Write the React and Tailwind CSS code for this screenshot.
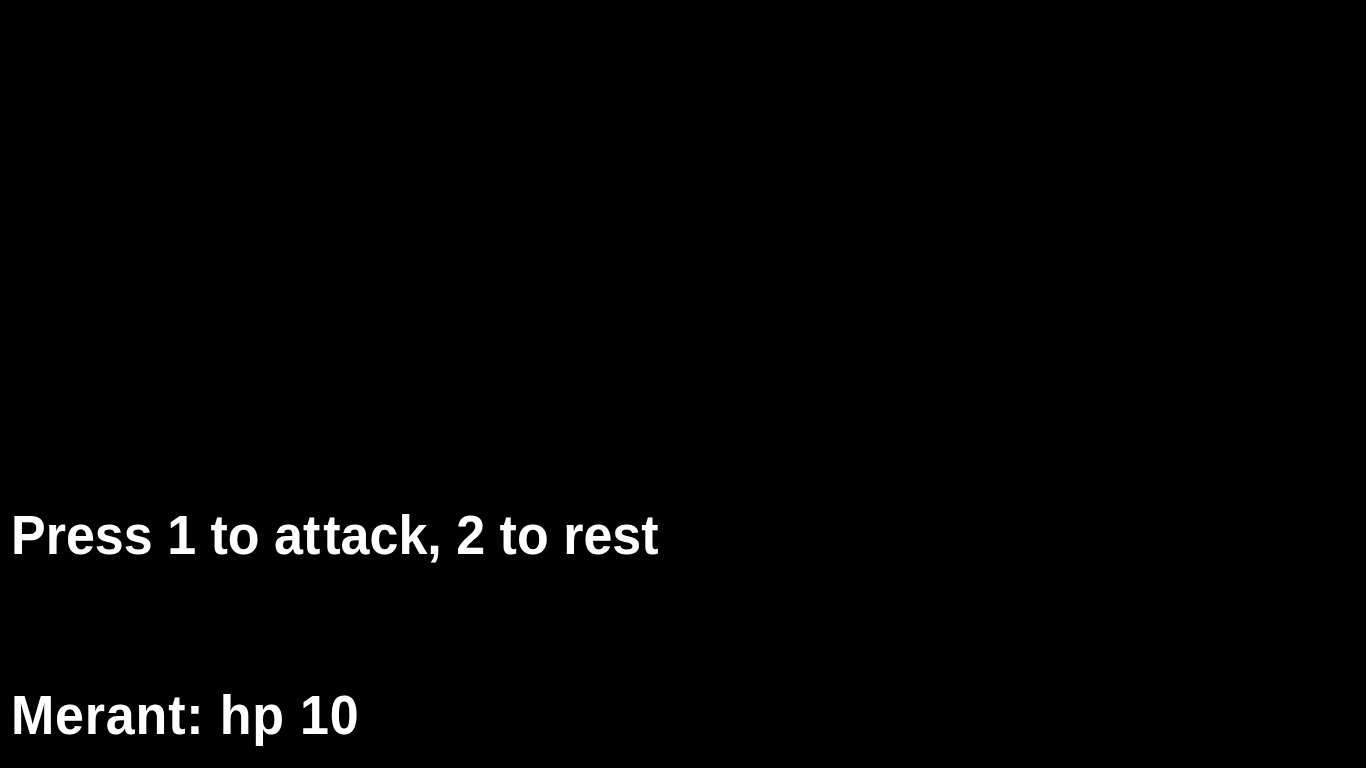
export default function App() {
  return (
    <div className="flex h-screen w-full flex-col justify-end bg-black pb-[25px] pl-[11px] font-['Liberation_Sans',Arial,sans-serif] text-[52px] font-bold leading-none text-white">
      <p className="mb-[128px] origin-bottom scale-y-[1.08]">
        Press 1 to a<span className="mr-[3px]">t</span>tack, 2 to rest
      </p>
      <p className="origin-bottom scale-y-[1.08] tracking-[0.8px]">Merant: hp 10</p>
    </div>
  );
}
